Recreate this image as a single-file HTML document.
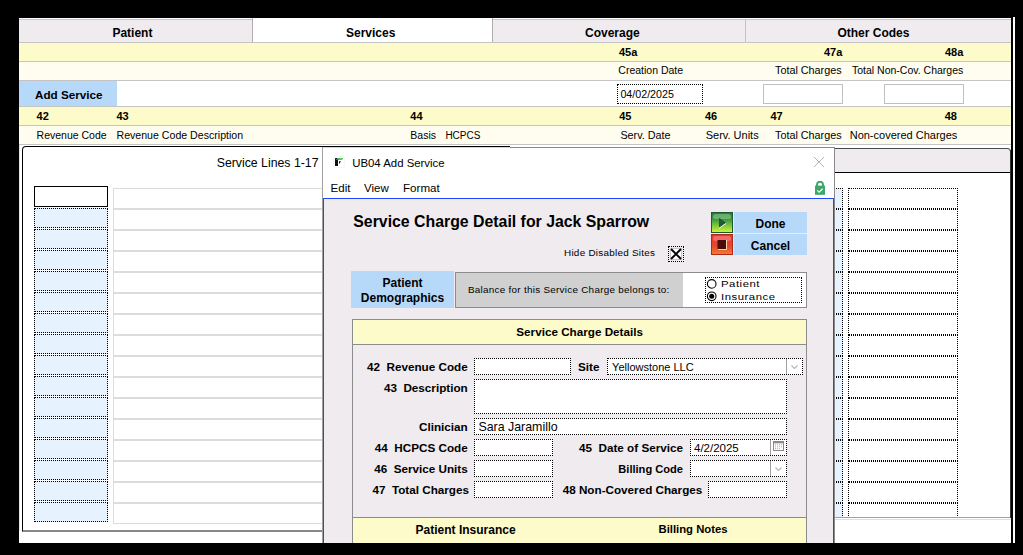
<!DOCTYPE html>
<html><head><meta charset="utf-8"><style>
html,body{margin:0;padding:0;}
body{width:1023px;height:555px;background:#000;position:relative;overflow:hidden;font-family:"Liberation Sans",sans-serif;color:#000;}
.a{position:absolute;}
.t{position:absolute;line-height:1;white-space:pre;}
</style></head><body>
<div class="a" style="left:19px;top:18px;width:992px;height:525px;background:#fff;"></div>
<div class="a" style="left:1013px;top:17px;width:2px;height:526px;background:#fff;"></div>
<div class="a" style="left:19px;top:19px;width:992px;height:23px;background:#efebef;"></div>
<div class="a" style="left:253px;top:19px;width:239px;height:23px;background:#fff;"></div>
<div class="a" style="left:19px;top:19px;width:233px;height:1px;background:#c8c4c8;"></div>
<div class="a" style="left:493px;top:19px;width:518px;height:1px;background:#c8c4c8;"></div>
<div class="a" style="left:252px;top:18px;width:1px;height:24px;background:#b0acb0;"></div>
<div class="a" style="left:492px;top:18px;width:1px;height:24px;background:#b0acb0;"></div>
<div class="a" style="left:745px;top:19px;width:1px;height:23px;background:#c4c2c4;"></div>
<div class="a" style="left:19px;top:42px;width:992px;height:1px;background:#c4c4c4;"></div>
<div class="t" style="left:112.4px;top:26.84px;font-size:12px;font-weight:bold;">Patient</div>
<div class="t" style="left:346px;top:26.84px;font-size:12px;font-weight:bold;">Services</div>
<div class="t" style="left:585px;top:26.84px;font-size:12px;font-weight:bold;">Coverage</div>
<div class="t" style="left:837.4px;top:26.84px;font-size:12px;font-weight:bold;">Other Codes</div>
<div class="a" style="left:19px;top:43px;width:992px;height:18px;background:#fdfbc9;"></div>
<div class="a" style="left:19px;top:61px;width:992px;height:1px;background:#c4c4c4;"></div>
<div class="a" style="left:19px;top:62px;width:992px;height:18px;background:#fefdf0;"></div>
<div class="a" style="left:19px;top:80px;width:992px;height:1px;background:#c4c4c4;"></div>
<div class="a" style="left:19px;top:81px;width:992px;height:25px;background:#fff;"></div>
<div class="a" style="left:19px;top:106px;width:992px;height:1px;background:#c4c4c4;"></div>
<div class="a" style="left:19px;top:107px;width:992px;height:18px;background:#fdfbc9;"></div>
<div class="a" style="left:19px;top:125px;width:992px;height:1px;background:#c4c4c4;"></div>
<div class="a" style="left:19px;top:126px;width:992px;height:18px;background:#fefdf0;"></div>
<div class="a" style="left:19px;top:144px;width:992px;height:1px;background:#c4c4c4;"></div>
<div class="t" style="left:619px;top:46.69px;font-size:11px;font-weight:bold;">45a</div>
<div class="t" style="left:824px;top:46.69px;font-size:11px;font-weight:bold;">47a</div>
<div class="t" style="left:945px;top:46.69px;font-size:11px;font-weight:bold;">48a</div>
<div class="t" style="left:618.3px;top:65.31px;font-size:10.5px;">Creation Date</div>
<div class="t" style="left:775px;top:65.06px;font-size:10.8px;">Total Charges</div>
<div class="t" style="left:852px;top:65.31px;font-size:10.5px;">Total Non-Cov. Charges</div>
<div class="a" style="left:19px;top:81px;width:97.5px;height:25px;background:#b6d9fa;"></div>
<div class="t" style="left:35px;top:89.10px;font-size:11.7px;font-weight:bold;">Add Service</div>
<div class="a" style="left:617px;top:84px;width:86px;height:20px;background:#fff;border:1px dotted #000;box-sizing:border-box;"></div>
<div class="t" style="left:620.4px;top:88.94px;font-size:10.7px;">04/02/2025</div>
<div class="a" style="left:763px;top:84px;width:80px;height:20px;background:#fff;border:1px solid #c0c0c0;box-sizing:border-box;"></div>
<div class="a" style="left:884px;top:84px;width:80px;height:20px;background:#fff;border:1px solid #c0c0c0;box-sizing:border-box;"></div>
<div class="t" style="left:36.6px;top:110.69px;font-size:11px;font-weight:bold;">42</div>
<div class="t" style="left:116.5px;top:110.69px;font-size:11px;font-weight:bold;">43</div>
<div class="t" style="left:410.3px;top:110.69px;font-size:11px;font-weight:bold;">44</div>
<div class="t" style="left:619.2px;top:110.69px;font-size:11px;font-weight:bold;">45</div>
<div class="t" style="left:705px;top:110.69px;font-size:11px;font-weight:bold;">46</div>
<div class="t" style="left:770.5px;top:110.69px;font-size:11px;font-weight:bold;">47</div>
<div class="t" style="left:944.7px;top:110.69px;font-size:11px;font-weight:bold;">48</div>
<div class="t" style="left:36.6px;top:130.11px;font-size:10.5px;">Revenue Code</div>
<div class="t" style="left:116.5px;top:130.03px;font-size:10.6px;">Revenue Code Description</div>
<div class="t" style="left:410.3px;top:130.11px;font-size:10.5px;">Basis</div>
<div class="t" style="left:445.4px;top:130.53px;font-size:10px;">HCPCS</div>
<div class="t" style="left:620.4px;top:129.86px;font-size:10.8px;">Serv. Date</div>
<div class="t" style="left:705.7px;top:129.69px;font-size:11px;">Serv. Units</div>
<div class="t" style="left:775px;top:129.86px;font-size:10.8px;">Total Charges</div>
<div class="t" style="left:849.7px;top:129.69px;font-size:11px;">Non-covered Charges</div>
<div class="a" style="left:22px;top:146px;width:989px;height:386px;background:#fff;border:1px solid #000;border-top-width:1px;border-radius:4px 4px 0 0;box-sizing:border-box;border-bottom:2px solid #888;"></div>
<div class="a" style="left:19px;top:145px;width:1px;height:386px;background:#e4e4e4;"></div>
<div class="t" style="left:216.7px;top:156.89px;font-size:12.3px;">Service Lines 1-17</div>
<div class="a" style="left:510px;top:146px;width:501px;height:2px;background:#fff;"></div>
<div class="a" style="left:1004px;top:146px;width:7px;height:5px;background:#fff;"></div>
<div class="a" style="left:834px;top:148px;width:177px;height:25px;background:#efebef;border-top:1px solid #4a4a4a;border-right:1px solid #333;border-radius:0 4px 0 0;box-sizing:border-box;"></div>
<div class="a" style="left:834px;top:172px;width:177px;height:1px;background:#000;"></div>
<div class="a" style="left:34px;top:186px;width:74px;height:21px;background:#fff;border:1px solid #000;box-sizing:border-box;"></div>
<div class="a" style="left:113px;top:188px;width:700px;height:21px;background:#fff;border:1px solid #dcdcdc;box-sizing:border-box;"></div>
<div class="a" style="left:34px;top:208px;width:74px;height:20px;background:#e6f2fd;border:1px dotted #000;box-sizing:border-box;"></div>
<div class="a" style="left:113px;top:209px;width:700px;height:21px;background:#fff;border:1px solid #dcdcdc;box-sizing:border-box;"></div>
<div class="a" style="left:34px;top:229px;width:74px;height:20px;background:#e6f2fd;border:1px dotted #000;box-sizing:border-box;"></div>
<div class="a" style="left:113px;top:230px;width:700px;height:21px;background:#fff;border:1px solid #dcdcdc;box-sizing:border-box;"></div>
<div class="a" style="left:34px;top:250px;width:74px;height:20px;background:#e6f2fd;border:1px dotted #000;box-sizing:border-box;"></div>
<div class="a" style="left:113px;top:251px;width:700px;height:21px;background:#fff;border:1px solid #dcdcdc;box-sizing:border-box;"></div>
<div class="a" style="left:34px;top:271px;width:74px;height:20px;background:#e6f2fd;border:1px dotted #000;box-sizing:border-box;"></div>
<div class="a" style="left:113px;top:272px;width:700px;height:21px;background:#fff;border:1px solid #dcdcdc;box-sizing:border-box;"></div>
<div class="a" style="left:34px;top:292px;width:74px;height:20px;background:#e6f2fd;border:1px dotted #000;box-sizing:border-box;"></div>
<div class="a" style="left:113px;top:293px;width:700px;height:21px;background:#fff;border:1px solid #dcdcdc;box-sizing:border-box;"></div>
<div class="a" style="left:34px;top:313px;width:74px;height:20px;background:#e6f2fd;border:1px dotted #000;box-sizing:border-box;"></div>
<div class="a" style="left:113px;top:314px;width:700px;height:21px;background:#fff;border:1px solid #dcdcdc;box-sizing:border-box;"></div>
<div class="a" style="left:34px;top:334px;width:74px;height:20px;background:#e6f2fd;border:1px dotted #000;box-sizing:border-box;"></div>
<div class="a" style="left:113px;top:335px;width:700px;height:21px;background:#fff;border:1px solid #dcdcdc;box-sizing:border-box;"></div>
<div class="a" style="left:34px;top:355px;width:74px;height:20px;background:#e6f2fd;border:1px dotted #000;box-sizing:border-box;"></div>
<div class="a" style="left:113px;top:356px;width:700px;height:21px;background:#fff;border:1px solid #dcdcdc;box-sizing:border-box;"></div>
<div class="a" style="left:34px;top:376px;width:74px;height:20px;background:#e6f2fd;border:1px dotted #000;box-sizing:border-box;"></div>
<div class="a" style="left:113px;top:377px;width:700px;height:21px;background:#fff;border:1px solid #dcdcdc;box-sizing:border-box;"></div>
<div class="a" style="left:34px;top:397px;width:74px;height:20px;background:#e6f2fd;border:1px dotted #000;box-sizing:border-box;"></div>
<div class="a" style="left:113px;top:398px;width:700px;height:21px;background:#fff;border:1px solid #dcdcdc;box-sizing:border-box;"></div>
<div class="a" style="left:34px;top:418px;width:74px;height:20px;background:#e6f2fd;border:1px dotted #000;box-sizing:border-box;"></div>
<div class="a" style="left:113px;top:419px;width:700px;height:21px;background:#fff;border:1px solid #dcdcdc;box-sizing:border-box;"></div>
<div class="a" style="left:34px;top:439px;width:74px;height:20px;background:#e6f2fd;border:1px dotted #000;box-sizing:border-box;"></div>
<div class="a" style="left:113px;top:440px;width:700px;height:21px;background:#fff;border:1px solid #dcdcdc;box-sizing:border-box;"></div>
<div class="a" style="left:34px;top:460px;width:74px;height:20px;background:#e6f2fd;border:1px dotted #000;box-sizing:border-box;"></div>
<div class="a" style="left:113px;top:461px;width:700px;height:21px;background:#fff;border:1px solid #dcdcdc;box-sizing:border-box;"></div>
<div class="a" style="left:34px;top:481px;width:74px;height:20px;background:#e6f2fd;border:1px dotted #000;box-sizing:border-box;"></div>
<div class="a" style="left:113px;top:482px;width:700px;height:21px;background:#fff;border:1px solid #dcdcdc;box-sizing:border-box;"></div>
<div class="a" style="left:34px;top:502px;width:74px;height:20px;background:#e6f2fd;border:1px dotted #000;box-sizing:border-box;"></div>
<div class="a" style="left:113px;top:503px;width:700px;height:21px;background:#fff;border:1px solid #dcdcdc;box-sizing:border-box;"></div>
<div class="a" style="left:770px;top:188px;width:73px;height:21px;background:#e6f2fd;border:1px dotted #000;box-sizing:border-box;"></div>
<div class="a" style="left:848px;top:188px;width:110px;height:21px;background:#fff;border:1px dotted #000;box-sizing:border-box;"></div>
<div class="a" style="left:770px;top:209px;width:73px;height:21px;background:#e6f2fd;border:1px dotted #000;box-sizing:border-box;"></div>
<div class="a" style="left:848px;top:209px;width:110px;height:21px;background:#fff;border:1px dotted #000;box-sizing:border-box;"></div>
<div class="a" style="left:770px;top:230px;width:73px;height:21px;background:#e6f2fd;border:1px dotted #000;box-sizing:border-box;"></div>
<div class="a" style="left:848px;top:230px;width:110px;height:21px;background:#fff;border:1px dotted #000;box-sizing:border-box;"></div>
<div class="a" style="left:770px;top:251px;width:73px;height:21px;background:#e6f2fd;border:1px dotted #000;box-sizing:border-box;"></div>
<div class="a" style="left:848px;top:251px;width:110px;height:21px;background:#fff;border:1px dotted #000;box-sizing:border-box;"></div>
<div class="a" style="left:770px;top:272px;width:73px;height:21px;background:#e6f2fd;border:1px dotted #000;box-sizing:border-box;"></div>
<div class="a" style="left:848px;top:272px;width:110px;height:21px;background:#fff;border:1px dotted #000;box-sizing:border-box;"></div>
<div class="a" style="left:770px;top:293px;width:73px;height:21px;background:#e6f2fd;border:1px dotted #000;box-sizing:border-box;"></div>
<div class="a" style="left:848px;top:293px;width:110px;height:21px;background:#fff;border:1px dotted #000;box-sizing:border-box;"></div>
<div class="a" style="left:770px;top:314px;width:73px;height:21px;background:#e6f2fd;border:1px dotted #000;box-sizing:border-box;"></div>
<div class="a" style="left:848px;top:314px;width:110px;height:21px;background:#fff;border:1px dotted #000;box-sizing:border-box;"></div>
<div class="a" style="left:770px;top:335px;width:73px;height:21px;background:#e6f2fd;border:1px dotted #000;box-sizing:border-box;"></div>
<div class="a" style="left:848px;top:335px;width:110px;height:21px;background:#fff;border:1px dotted #000;box-sizing:border-box;"></div>
<div class="a" style="left:770px;top:356px;width:73px;height:21px;background:#e6f2fd;border:1px dotted #000;box-sizing:border-box;"></div>
<div class="a" style="left:848px;top:356px;width:110px;height:21px;background:#fff;border:1px dotted #000;box-sizing:border-box;"></div>
<div class="a" style="left:770px;top:377px;width:73px;height:21px;background:#e6f2fd;border:1px dotted #000;box-sizing:border-box;"></div>
<div class="a" style="left:848px;top:377px;width:110px;height:21px;background:#fff;border:1px dotted #000;box-sizing:border-box;"></div>
<div class="a" style="left:770px;top:398px;width:73px;height:21px;background:#e6f2fd;border:1px dotted #000;box-sizing:border-box;"></div>
<div class="a" style="left:848px;top:398px;width:110px;height:21px;background:#fff;border:1px dotted #000;box-sizing:border-box;"></div>
<div class="a" style="left:770px;top:419px;width:73px;height:21px;background:#e6f2fd;border:1px dotted #000;box-sizing:border-box;"></div>
<div class="a" style="left:848px;top:419px;width:110px;height:21px;background:#fff;border:1px dotted #000;box-sizing:border-box;"></div>
<div class="a" style="left:770px;top:440px;width:73px;height:21px;background:#e6f2fd;border:1px dotted #000;box-sizing:border-box;"></div>
<div class="a" style="left:848px;top:440px;width:110px;height:21px;background:#fff;border:1px dotted #000;box-sizing:border-box;"></div>
<div class="a" style="left:770px;top:461px;width:73px;height:21px;background:#e6f2fd;border:1px dotted #000;box-sizing:border-box;"></div>
<div class="a" style="left:848px;top:461px;width:110px;height:21px;background:#fff;border:1px dotted #000;box-sizing:border-box;"></div>
<div class="a" style="left:770px;top:482px;width:73px;height:21px;background:#e6f2fd;border:1px dotted #000;box-sizing:border-box;"></div>
<div class="a" style="left:848px;top:482px;width:110px;height:21px;background:#fff;border:1px dotted #000;box-sizing:border-box;"></div>
<div class="a" style="left:770px;top:503px;width:73px;height:21px;background:#e6f2fd;border:1px dotted #000;box-sizing:border-box;"></div>
<div class="a" style="left:848px;top:503px;width:110px;height:21px;background:#fff;border:1px dotted #000;box-sizing:border-box;"></div>
<div class="a" style="left:834px;top:517px;width:177px;height:26px;background:#fff;"></div>
<div class="a" style="left:834px;top:517px;width:177px;height:1px;background:#9aa0b8;"></div>
<div class="a" style="left:834px;top:519px;width:177px;height:1px;background:#e0dcea;"></div>
<div class="a" style="left:1010px;top:150px;width:1px;height:368px;background:#333;"></div>
<div class="a" style="left:1011px;top:17px;width:2px;height:526px;background:#000;"></div>
<div class="a" style="left:322px;top:147px;width:513px;height:396px;background:#fff;border-left:1px solid #a0a0a0;border-right:1px solid #8a8a8a;box-sizing:border-box;"></div>
<div class="a" style="left:323px;top:147px;width:187px;height:1px;background:#d8d8d8;"></div>
<div class="a" style="left:510px;top:147px;width:324px;height:1px;background:#8a8a8a;"></div>
<svg class="a" style="left:333px;top:156px" width="12" height="12" viewBox="0 0 12 12"><rect x="0.5" y="0.5" width="11" height="11" rx="2" fill="#fff" stroke="#f0eef0" stroke-width="0.6"/><path d="M2 2.6L2.6 2H4.2L5 2.8V10H2Z" fill="#111"/><path d="M3.6 3.9L5 2.3" stroke="#fff" stroke-width="0.7"/><path d="M5 2H10L9.2 4.1H5Z" fill="#4cd34c"/><path d="M5 2H6.3V4.1H5Z" fill="#3fb08a"/><path d="M6 5.2H8L6.3 7.8H6Z" fill="#111"/></svg>
<div class="t" style="left:352.2px;top:157.65px;font-size:11.4px;">UB04 Add Service</div>
<svg class="a" style="left:814px;top:157px" width="10" height="10" viewBox="0 0 10 10"><path d="M0 0L10 10M10 0L0 10" stroke="#b4b4b4" stroke-width="1"/></svg>
<div class="t" style="left:330.6px;top:182.57px;font-size:11.5px;">Edit</div>
<div class="t" style="left:364px;top:182.57px;font-size:11.5px;">View</div>
<div class="t" style="left:403px;top:182.48px;font-size:11.6px;">Format</div>
<svg class="a" style="left:815px;top:181px" width="10" height="14" viewBox="0 0 10 14"><path d="M2 5V3.8a3 3 0 0 1 6 0V5" fill="none" stroke="#3fa66a" stroke-width="2"/><rect x="0" y="4.6" width="10" height="9.2" fill="#3fa66a"/><path d="M2.3 9.3l1.8 1.8 3.6-3.4" fill="none" stroke="#fff" stroke-width="1.2"/></svg>
<div class="a" style="left:323px;top:198px;width:511px;height:345px;background:#efebef;border:1px solid #1f46fb;border-bottom:none;box-sizing:border-box;"></div>
<div class="t" style="left:353.3px;top:214.38px;font-size:15.85px;font-weight:bold;">Service Charge Detail for Jack Sparrow</div>
<div class="a" style="left:711px;top:212px;width:22px;height:21px;background:linear-gradient(#2a7838 0%,#3f9a3c 35%,#c8f53a 100%);border:1px solid #1d5a30;box-sizing:border-box"></div>
<svg class="a" style="left:711px;top:212px" width="22" height="21" viewBox="0 0 22 21"><rect x="2" y="2" width="18" height="5" rx="2.5" fill="#bfe8c0" opacity="0.4"/><path d="M8 5.8L15.2 10.8L8 15.8Z" fill="#1d5a3a"/><path d="M8 16.4L15.2 11.3" stroke="#fff" stroke-width="0.9"/></svg>
<div class="a" style="left:734px;top:212px;width:73px;height:21px;background:#b6d9fa;"></div>
<div class="t" style="left:734.0px;width:73px;text-align:center;top:217.84px;font-size:12px;font-weight:bold;">Done</div>
<div class="a" style="left:711px;top:234px;width:22px;height:21px;background:linear-gradient(#e53a2a 0%,#e8482c 60%,#f27a30 100%);border:1px solid #b02818;box-sizing:border-box"></div>
<svg class="a" style="left:711px;top:234px" width="22" height="21" viewBox="0 0 22 21"><rect x="2" y="2" width="18" height="5" rx="2.5" fill="#ff8a9a" opacity="0.55"/><path d="M7 15.5H15.5V6" fill="none" stroke="#f5d8b8" stroke-width="1"/><rect x="6.5" y="6" width="8.5" height="9" fill="#4a0e0a"/></svg>
<div class="a" style="left:734px;top:234px;width:73px;height:21px;background:#b6d9fa;"></div>
<div class="t" style="left:734.0px;width:73px;text-align:center;top:239.84px;font-size:12px;font-weight:bold;">Cancel</div>
<div class="t" style="left:564.4px;top:249.01px;font-size:9.2px;letter-spacing:0.25px;transform:scaleX(1.075);transform-origin:0 0;">Hide Disabled Sites</div>
<div class="a" style="left:668px;top:246px;width:16px;height:16px;border:1px dotted #000;box-sizing:border-box;"></div>
<svg class="a" style="left:670px;top:248px" width="12" height="12" viewBox="0 0 12 12"><rect x="0.5" y="0.5" width="11" height="11" fill="#fff" stroke="#c8c8c8" stroke-width="1"/><path d="M1 1L11 11M11 1L1 11" stroke="#000" stroke-width="1.9"/></svg>
<div class="a" style="left:351px;top:271px;width:103px;height:37px;background:#b6d9fa;"></div>
<div class="t" style="left:351.0px;width:103px;text-align:center;top:276.84px;font-size:12px;font-weight:bold;">Patient</div>
<div class="t" style="left:351.0px;width:103px;text-align:center;top:291.84px;font-size:12px;font-weight:bold;">Demographics</div>
<div class="a" style="left:455px;top:272px;width:229px;height:36px;background:#d0d0d0;border:1px solid #8c8c8c;box-sizing:border-box;"></div>
<div class="t" style="left:467.6px;top:286.11px;font-size:9.2px;letter-spacing:0.25px;transform:scaleX(1.075);transform-origin:0 0;">Balance for this Service Charge belongs to:</div>
<div class="a" style="left:683px;top:272px;width:124px;height:36px;background:#fff;border:1px solid #8c8c8c;border-left:none;box-sizing:border-box;"></div>
<div class="a" style="left:705px;top:277px;width:97px;height:26px;border:1px dotted #000;box-sizing:border-box;"></div>
<svg class="a" style="left:706px;top:278px" width="12" height="24" viewBox="0 0 12 24"><circle cx="5.7" cy="5.9" r="4.3" fill="#fff" stroke="#000" stroke-width="1.1"/><circle cx="5.7" cy="18.3" r="4.3" fill="#fff" stroke="#000" stroke-width="1.1"/><circle cx="5.7" cy="18.3" r="2.5" fill="#000"/></svg>
<div class="t" style="left:721px;top:279.47px;font-size:9.6px;letter-spacing:0.45px;transform:scaleX(1.18);transform-origin:0 0;">Patient</div>
<div class="t" style="left:721px;top:291.67px;font-size:9.6px;letter-spacing:0.45px;transform:scaleX(1.18);transform-origin:0 0;">Insurance</div>
<div class="a" style="left:352px;top:319px;width:455px;height:230px;background:#efebef;border:1px solid #8c8c8c;box-sizing:border-box;"></div>
<div class="a" style="left:353px;top:320px;width:453px;height:24px;background:#fdfbc9;"></div>
<div class="a" style="left:353px;top:344px;width:453px;height:1px;background:#8c8c8c;"></div>
<div class="t" style="left:516.3px;top:326.10px;font-size:11.7px;font-weight:bold;">Service Charge Details</div>
<div class="t" style="right:555.3px;top:361.10px;font-size:11.7px;font-weight:bold;">42&nbsp; Revenue Code</div>
<div class="t" style="right:555.3px;top:382.10px;font-size:11.7px;font-weight:bold;">43&nbsp; Description</div>
<div class="t" style="right:555.3px;top:421.10px;font-size:11.7px;font-weight:bold;">Clinician</div>
<div class="t" style="right:555.3px;top:442.10px;font-size:11.7px;font-weight:bold;">44&nbsp; HCPCS Code</div>
<div class="t" style="right:555.3px;top:463.10px;font-size:11.7px;font-weight:bold;">46&nbsp; Service Units</div>
<div class="t" style="right:554px;top:484.10px;font-size:11.7px;font-weight:bold;">47&nbsp; Total Charges</div>
<div class="t" style="right:423.6px;top:361.10px;font-size:11.7px;font-weight:bold;">Site</div>
<div class="t" style="right:340px;top:442.10px;font-size:11.7px;font-weight:bold;">45&nbsp; Date of Service</div>
<div class="t" style="right:340px;top:463.60px;font-size:11.1px;font-weight:bold;">Billing Code</div>
<div class="t" style="right:320.70000000000005px;top:484.10px;font-size:11.7px;font-weight:bold;">48 Non-Covered Charges</div>
<div class="a" style="left:474px;top:358px;width:97px;height:17px;background:#fff;border:1px dotted #000;box-sizing:border-box;"></div>
<div class="a" style="left:607px;top:358px;width:196px;height:17px;background:#fff;border:1px dotted #000;box-sizing:border-box;"></div>
<div class="a" style="left:786px;top:359px;width:1px;height:15px;background:#a0a0a0;"></div>
<svg class="a" style="left:791px;top:365px" width="7" height="5" viewBox="0 0 7 5"><path d="M0.5 0.5L3.5 3.5L6.5 0.5" fill="none" stroke="#b4b4b4" stroke-width="1.1"/></svg>
<div class="t" style="left:612.1px;top:362.19px;font-size:11px;">Yellowstone LLC</div>
<div class="a" style="left:474px;top:379px;width:313px;height:35px;background:#fff;border:1px dotted #000;box-sizing:border-box;"></div>
<div class="a" style="left:474px;top:418px;width:313px;height:17px;background:#fff;border:1px dotted #000;box-sizing:border-box;"></div>
<div class="t" style="left:478.4px;top:421.00px;font-size:12.4px;">Sara Jaramillo</div>
<div class="a" style="left:474px;top:439px;width:79px;height:17px;background:#fff;border:1px dotted #000;box-sizing:border-box;"></div>
<div class="a" style="left:474px;top:460px;width:79px;height:17px;background:#fff;border:1px dotted #000;box-sizing:border-box;"></div>
<div class="a" style="left:474px;top:481px;width:79px;height:17px;background:#fff;border:1px dotted #000;box-sizing:border-box;"></div>
<div class="a" style="left:690px;top:439px;width:97px;height:17px;background:#fff;border:1px dotted #000;box-sizing:border-box;"></div>
<div class="a" style="left:770px;top:440px;width:1px;height:15px;background:#a0a0a0;"></div>
<svg class="a" style="left:773px;top:441px" width="11" height="10" viewBox="0 0 11 10"><rect x="0.5" y="0.5" width="10" height="9" fill="#fff" stroke="#8a8a8a"/><rect x="0" y="0" width="11" height="2.3" fill="#8a8a8a"/><g fill="#a8a8a8"><rect x="2" y="3.3" width="1" height="1"/><rect x="4" y="3.3" width="1" height="1"/><rect x="6" y="3.3" width="1" height="1"/><rect x="8" y="3.3" width="1" height="1"/><rect x="2" y="5.3" width="1" height="1"/><rect x="4" y="5.3" width="1" height="1"/><rect x="6" y="5.3" width="1" height="1"/><rect x="8" y="5.3" width="1" height="1"/><rect x="2" y="7.2" width="1" height="1"/><rect x="4" y="7.2" width="1" height="1"/><rect x="6" y="7.2" width="1" height="1"/></g></svg>
<div class="t" style="left:694px;top:442.77px;font-size:11.5px;">4/2/2025</div>
<div class="a" style="left:690px;top:460px;width:97px;height:17px;background:#fff;border:1px dotted #000;box-sizing:border-box;"></div>
<div class="a" style="left:770px;top:461px;width:1px;height:15px;background:#a0a0a0;"></div>
<svg class="a" style="left:775px;top:466.5px" width="7" height="5" viewBox="0 0 7 5"><path d="M0.5 0.5L3.5 3.5L6.5 0.5" fill="none" stroke="#b4b4b4" stroke-width="1.1"/></svg>
<div class="a" style="left:708px;top:481px;width:79px;height:17px;background:#fff;border:1px dotted #000;box-sizing:border-box;"></div>
<div class="a" style="left:353px;top:517px;width:453px;height:26px;background:#fdfbc9;"></div>
<div class="a" style="left:353px;top:517px;width:453px;height:1px;background:#8c8c8c;"></div>
<div class="t" style="left:415.6px;top:523.84px;font-size:12px;font-weight:bold;">Patient Insurance</div>
<div class="t" style="left:658.5px;top:524.43px;font-size:11.3px;font-weight:bold;">Billing Notes</div>
<div class="a" style="left:0px;top:543px;width:1023px;height:12px;background:#000;"></div>
</body></html>
